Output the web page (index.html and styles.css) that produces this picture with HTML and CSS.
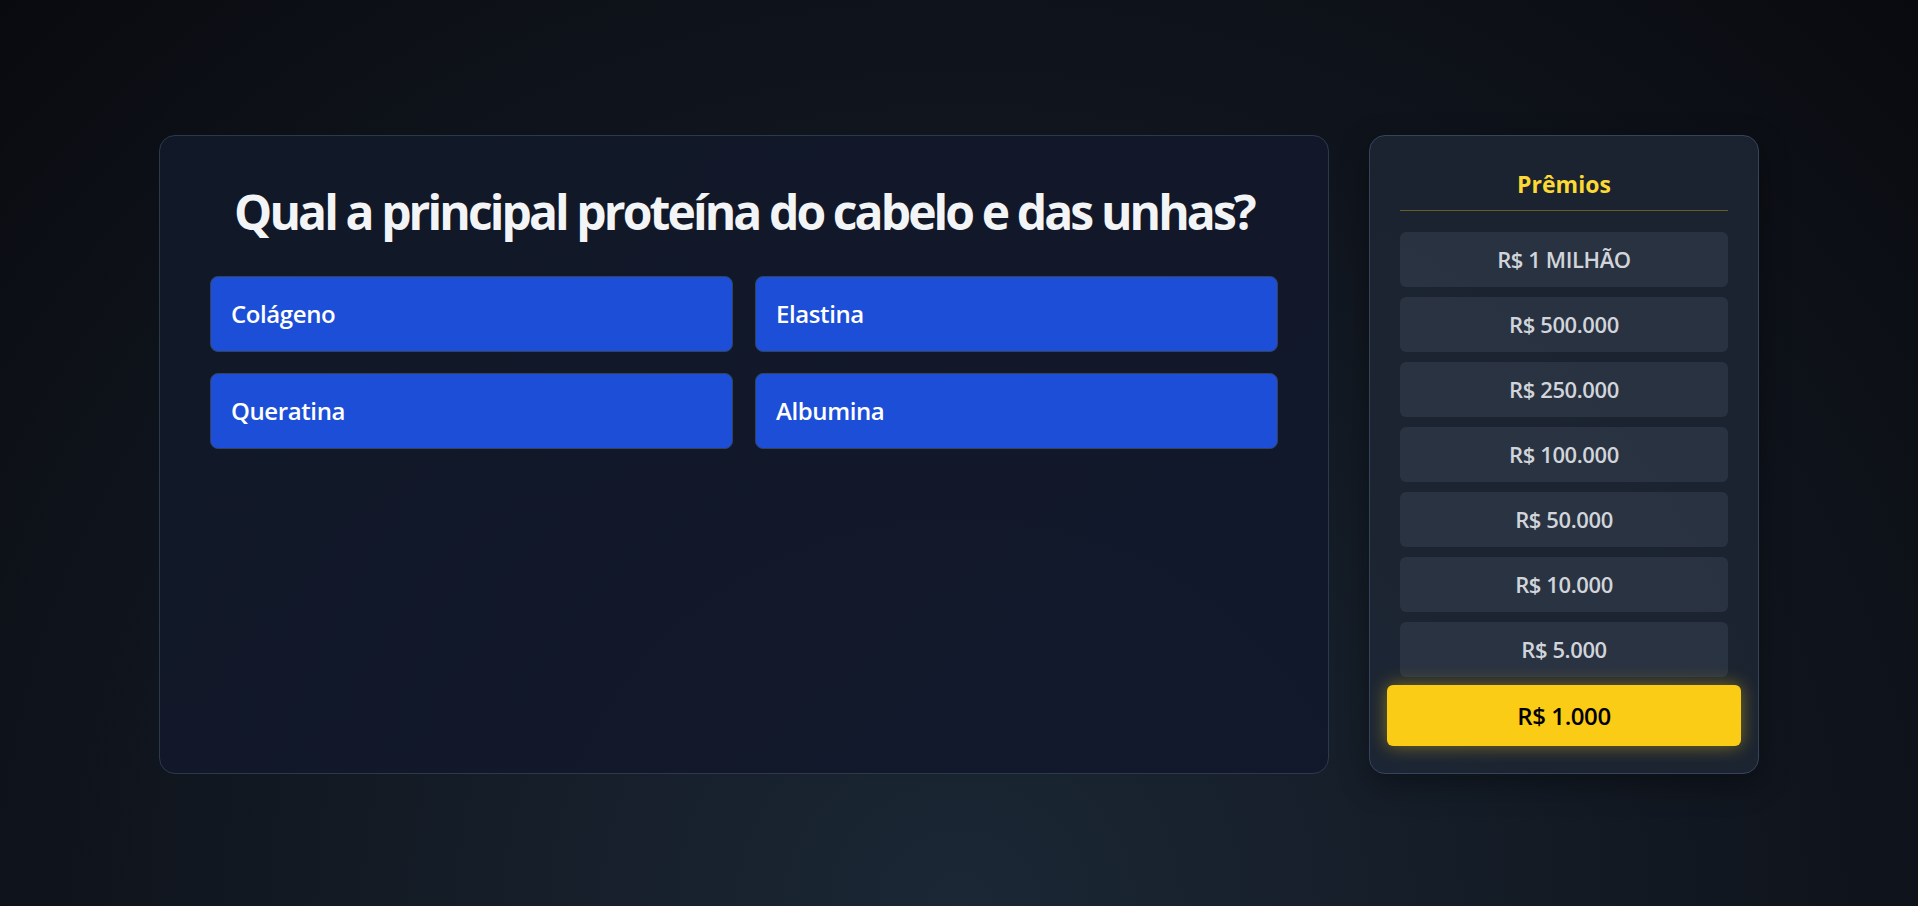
FILE: index.html
```html
<!DOCTYPE html>
<html lang="pt-BR">
<head>
<meta charset="utf-8">
<title>Show do Milhão</title>
<link rel="stylesheet" href="styles.css">
</head>
<body>
<main class="game">
  <section class="question-card">
    <h1 class="question">Qual a principal proteína do cabelo e das unhas?</h1>
    <div class="answers">
      <button class="answer">Colágeno</button>
      <button class="answer">Elastina</button>
      <button class="answer">Queratina</button>
      <button class="answer">Albumina</button>
    </div>
  </section>
  <aside class="prizes">
    <h2 class="prizes-title">Prêmios</h2>
    <ul class="prize-list">
      <li class="prize">R$ 1 MILHÃO</li>
      <li class="prize">R$ 500.000</li>
      <li class="prize">R$ 250.000</li>
      <li class="prize">R$ 100.000</li>
      <li class="prize">R$ 50.000</li>
      <li class="prize">R$ 10.000</li>
      <li class="prize">R$ 5.000</li>
      <li class="prize prize-active">R$ 1.000</li>
    </ul>
  </aside>
</main>
</body>
</html>
```

FILE: styles.css
```css
* { box-sizing: border-box; }

html, body {
  margin: 0;
  height: 100%;
}

body {
  font-family: "Open Sans", "Noto Sans", sans-serif;
  background: radial-gradient(ellipse at bottom, #1b2735 0%, #090a0f 100%);
  display: flex;
  align-items: center;
  justify-content: center;
  padding-top: 2px;
}

.game {
  width: 1600px;
  display: flex;
  gap: 40px;
  align-items: stretch;
}

.question-card {
  flex: 1;
  background: linear-gradient(135deg, rgba(17, 24, 39, 0.96), rgba(18, 24, 44, 0.96));
  border: 1px solid #2c394c;
  border-radius: 16px;
  padding: 50px;
}

.question {
  margin: 2px 0 40px;
  font-size: 48px;
  line-height: 48px;
  font-weight: 700;
  color: #f3f4f6;
  text-align: center;
  letter-spacing: -2.9px;
  white-space: nowrap;
}

.answers {
  display: grid;
  grid-template-columns: 1fr 1fr;
  gap: 21px 22px;
}

.answer {
  height: 76px;
  padding: 0 20px;
  background: #1d4ed8;
  border: 1px solid #33435e;
  border-radius: 8px;
  color: #ffffff;
  font-family: inherit;
  font-size: 24px;
  font-weight: 600;
  text-align: left;
  letter-spacing: -0.4px;
}

.prizes {
  width: 390px;
  flex: none;
  background: rgba(30, 39, 54, 0.82);
  border: 1px solid #35445a;
  border-radius: 16px;
  padding: 30px 30px 31px;
  box-shadow: 0 10px 30px rgba(0, 0, 0, 0.35);
}

.prizes-title {
  margin: 0 0 21px;
  padding: 2px 0 10px;
  border-bottom: 1px solid rgba(250, 204, 21, 0.35);
  font-size: 23px;
  line-height: 32px;
  font-weight: 700;
  color: #fcd934;
  text-align: center;
}

.prize-list {
  list-style: none;
  margin: 0;
  padding: 0;
  display: flex;
  flex-direction: column;
  gap: 10px;
}

.prize {
  height: 55px;
  display: flex;
  align-items: center;
  justify-content: center;
  background: rgba(55, 65, 81, 0.5);
  border-radius: 6px;
  color: #d1d5db;
  font-size: 22px;
  font-weight: 600;
  letter-spacing: -0.4px;
}

.prize-active {
  height: 61px;
  margin: -2px -13px -4px;
  background: #facc15;
  color: #000000;
  font-size: 24px;
  box-shadow: 0 0 18px rgba(250, 204, 21, 0.45);
}
```
